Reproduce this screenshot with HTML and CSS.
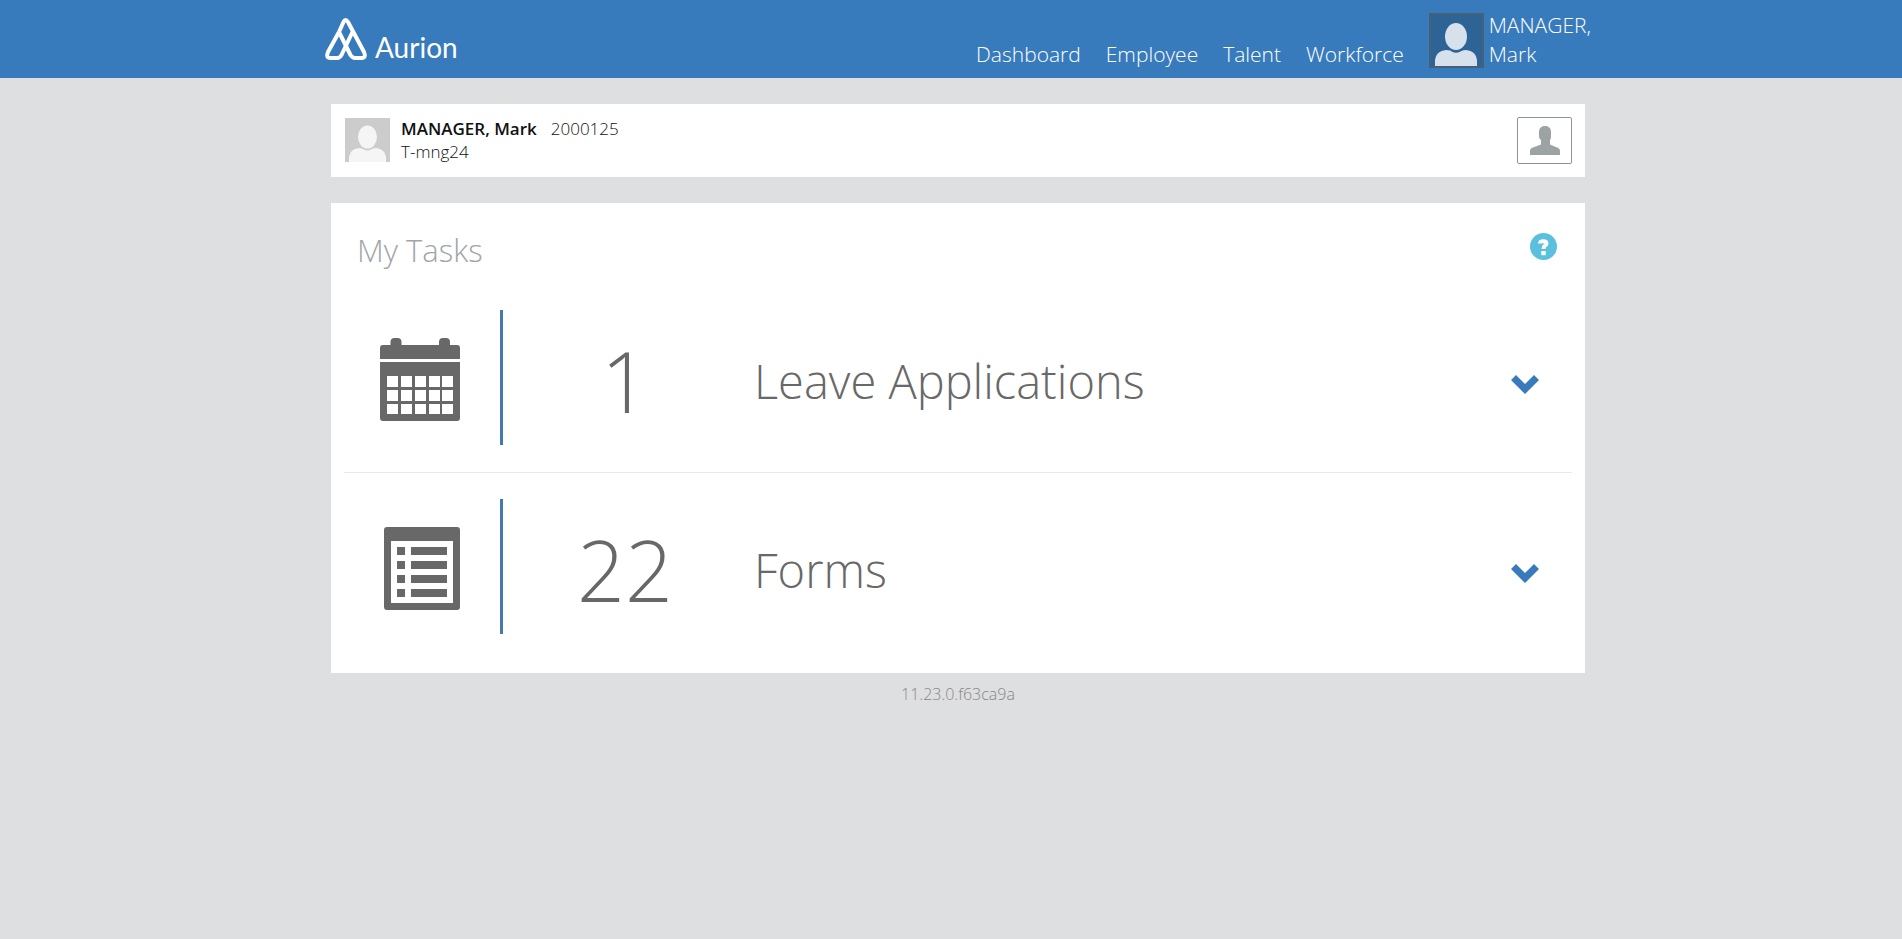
FILE: index.html
```html
<!DOCTYPE html>
<html lang="en">
<head>
<meta charset="utf-8">
<meta name="viewport" content="width=device-width, initial-scale=1">
<title>Aurion - My Tasks</title>
<link rel="stylesheet" href="styles.css">
</head>
<body>
<header class="topbar">
  <div class="topbar-inner">
    <a class="brand" href="#">
      <svg class="brand-mark" viewBox="0 0 42 42" aria-hidden="true">
        <path d="M14 14 L18.500 4 Q20.500 0 23 4 L39 34 Q41.500 40 36.500 40 H30 Q27.500 40 25.500 37 L14 14"/>
        <path d="M27.500 14 L16.500 37 Q15 40 12 40 H5.500 Q0.500 40 3 34 L14 14"/>
      </svg>
      <span class="brand-name">Aurion</span>
    </a>
    <nav class="nav">
      <a href="#">Dashboard</a>
      <a href="#">Employee</a>
      <a href="#">Talent</a>
      <a href="#">Workforce</a>
      <a class="account" href="#">
        <svg class="account-photo" viewBox="0 0 55 55" aria-hidden="true">
          <rect class="photo-frame" x="1" y="1" width="53" height="53"/>
          <path class="photo-person" d="M6 53 V47 Q7 38 17 37 Q22 37 22.500 38.500 Q27 41 31.500 38.500 Q33 37 37 37 Q47 38 48 47 V53 Z"/>
          <ellipse class="photo-person" cx="27" cy="23.500" rx="11" ry="13.500"/>
        </svg>
        <span class="account-name">MANAGER,<br>Mark</span>
      </a>
    </nav>
  </div>
</header>
<main class="content">
  <section class="card person">
    <svg class="person-photo" viewBox="0 0 45 44" aria-hidden="true">
      <rect width="45" height="44" fill="#ccc"/>
      <path fill="#f5f5f5" d="M4 44 V39 Q5 31 14 30 Q17 30 19 31.500 Q22.500 33.500 26 31.500 Q28 30 31 30 Q40 31 41 39 V44 Z"/>
      <ellipse fill="#f5f5f5" cx="22.500" cy="19" rx="9.500" ry="11.500"/>
    </svg>
    <div class="person-text">
      <div class="person-line"><strong>MANAGER, Mark</strong><span>2000125</span></div>
      <div>T-mng24</div>
    </div>
    <button class="profile-button" type="button" aria-label="Profile">
      <svg viewBox="0 0 30 29" aria-hidden="true"><path d="M15 0 C19 0 21 2.500 21 6 V10.500 Q21 13 20 14 V18.500 L27 21.500 Q30 22.500 30 25 V29 H0 V25 Q0 22.500 3 21.500 L11 18.500 V14 Q9 12.500 9 10.500 V6 C9 2.500 11 0 15 0 Z"/></svg>
    </button>
  </section>
  <section class="card tasks">
    <div class="tasks-head">
      <h1>My Tasks</h1>
      <button class="help" type="button" aria-label="Help">
        <svg viewBox="0 0 27 27" aria-hidden="true"><circle cx="13.500" cy="13.500" r="13.500" fill="#5bc0de"/><path d="M10 10.500 Q10 8.200 13.500 8.200 Q16.500 8.200 16.500 10.500 Q16.500 12 14.800 12.800 Q13.500 13.500 13.500 16" fill="none" stroke="#fff" stroke-width="4"/><rect x="11.300" y="18" width="4.400" height="4.200" fill="#fff"/></svg>
      </button>
    </div>
    <ul class="task-list">
      <li class="task">
        <div class="task-icon">
          <svg width="80" height="83" viewBox="0 0 80 83" aria-hidden="true">
            <path d="M0 21 V10 Q0 7 3 7 H10.500 V4 Q10.500 0 14.500 0 H17.500 Q21.500 0 21.500 4 V7 H59 V4 Q59 0 63 0 H66 Q70 0 70 4 V7 H77 Q80 7 80 10 V21 Z"/>
            <path fill-rule="evenodd" d="M0 24 H80 V80 Q80 83 77 83 H3 Q0 83 0 80 Z M7 38 V49 H18 V38 Z m14 0 v11 h11 v-11 z m14 0 v11 h11 v-11 z m14 0 v11 h11 v-11 z m13 0 v11 h11 v-11 z M7 52 V63 H18 V52 Z m14 0 v11 h11 v-11 z m14 0 v11 h11 v-11 z m14 0 v11 h11 v-11 z m13 0 v11 h11 v-11 z M7 66 V76 H18 V66 Z m14 0 v10 h11 v-10 z m14 0 v10 h11 v-10 z m14 0 v10 h11 v-10 z m13 0 v10 h11 v-10 z"/>
          </svg>
        </div>
        <span class="task-count">1</span>
        <h2 class="task-name">Leave Applications</h2>
        <button class="expand" type="button" aria-label="Show leave applications"><svg viewBox="0 0 28 19" aria-hidden="true"><path d="M5 0 L14 9 L23 0 L28 5 L14 19 L0 5 Z"/></svg></button>
      </li>
      <li class="task">
        <div class="task-icon">
          <svg width="76" height="83" viewBox="0 0 76 83" aria-hidden="true">
            <path fill-rule="evenodd" d="M3 0 H73 Q76 0 76 3 V80 Q76 83 73 83 H3 Q0 83 0 80 V3 Q0 0 3 0 Z M7 14 V76 H69 V14 Z"/>
            <path d="M13 20 h8 v8 h-8 z m14 0 h36 v8 h-36 z M13 34 h8 v8 h-8 z m14 0 h36 v8 h-36 z M13 48 h8 v8 h-8 z m14 0 h36 v8 h-36 z M13 62 h8 v8 h-8 z m14 0 h36 v8 h-36 z"/>
          </svg>
        </div>
        <span class="task-count">22</span>
        <h2 class="task-name">Forms</h2>
        <button class="expand" type="button" aria-label="Show forms"><svg viewBox="0 0 28 19" aria-hidden="true"><path d="M5 0 L14 9 L23 0 L28 5 L14 19 L0 5 Z"/></svg></button>
      </li>
    </ul>
  </section>
</main>
<footer class="version">11.23.0.f63ca9a</footer>
</body>
</html>
```
FILE: styles.css
```css
* { box-sizing: border-box; }
body {
  margin: 0;
  background: #dedfe1;
  color: #111;
  font-family: "Open Sans", sans-serif;
  font-weight: 300;
  font-size: 17px;
  line-height: 23px;
}
button { padding: 0; border: 0; background: none; cursor: pointer; }
svg { display: block; }
h1, h2 { margin: 0; font-weight: 300; }

.topbar { padding-left: 14px; background: #387bbc; color: #fff; }
.topbar a { color: inherit; text-decoration: none; }
.topbar-inner {
  display: flex;
  justify-content: space-between;
  align-items: flex-end;
  max-width: 1266px;
  margin: 0 auto;
  padding: 11px 0 9px;
}
.brand { display: flex; align-items: flex-end; gap: 8px; padding-bottom: 9px; }
.brand-mark { width: 42px; height: 42px; overflow: visible; fill: none; stroke: #fff; stroke-width: 4; stroke-linejoin: round; }
.brand-name { font: 400 28px/26px Lato, sans-serif; }
.nav { display: flex; align-items: flex-end; gap: 25px; font-size: 21px; line-height: 29px; }
.account { display: flex; gap: 5px; }
.account-photo { width: 55px; height: 55px; margin-top: 2px; }
.photo-frame { fill: #2e6396; stroke: #46607a; stroke-width: 2; }
.photo-person { fill: #d6e1ec; }

.content { max-width: 1268px; margin: 0 auto; padding: 26px 0 0 14px; }
.card { background: #fff; }
.person { display: flex; align-items: flex-start; padding: 13px 13px 13px 14px; }
.person-photo { width: 45px; height: 44px; margin-top: 1px; }
.person-text { flex: 1; padding-left: 11px; }
.person-line { display: flex; gap: 14px; }
.person strong { font-weight: 600; }
.profile-button {
  display: flex;
  justify-content: center;
  align-items: center;
  width: 55px;
  height: 47px;
  border: 1px solid #8f9497;
  border-radius: 2px;
}
.profile-button svg { width: 30px; height: 29px; fill: #9da2a5; }

.tasks { margin-top: 26px; padding: 26px 13px 13px; }
.tasks-head { display: flex; justify-content: space-between; align-items: flex-start; padding: 0 15px 0 13px; }
.tasks-head h1 { color: #a0a5a8; font-size: 31px; line-height: 42px; }
.help svg { width: 27px; height: 27px; }
.help { margin-top: 4px; }
.task-list { margin: 12px 0 0; padding: 0; list-style: none; }
.task {
  display: grid;
  grid-template-columns: 159px 240px 1fr 28px;
  align-items: center;
  padding: 27px 33px 26px 0;
}
.task:not(:last-child) { border-bottom: 1px solid #e6eaea; padding-bottom: 27px; }
.task + .task { padding-top: 26px; }
.task-icon { display: flex; justify-content: flex-end; align-items: center; height: 135px; padding: 3px 40px 0 0; border-right: 3px solid #4379b0; }
.task-icon svg { fill: #686868; }
.task-count { padding: 6px 0 0 4px; color: #686868; font-size: 84px; line-height: 100px; text-align: center; }
.task-name { padding: 6px 0 0 11px; color: #686868; font-size: 47px; line-height: 64px; }
.expand { padding-top: 13px; }
.expand svg { width: 28px; height: 19px; fill: #387bbc; }

.version { padding: 10px 0 10px 14px; color: #888; font-size: 16px; text-align: center; }
```
